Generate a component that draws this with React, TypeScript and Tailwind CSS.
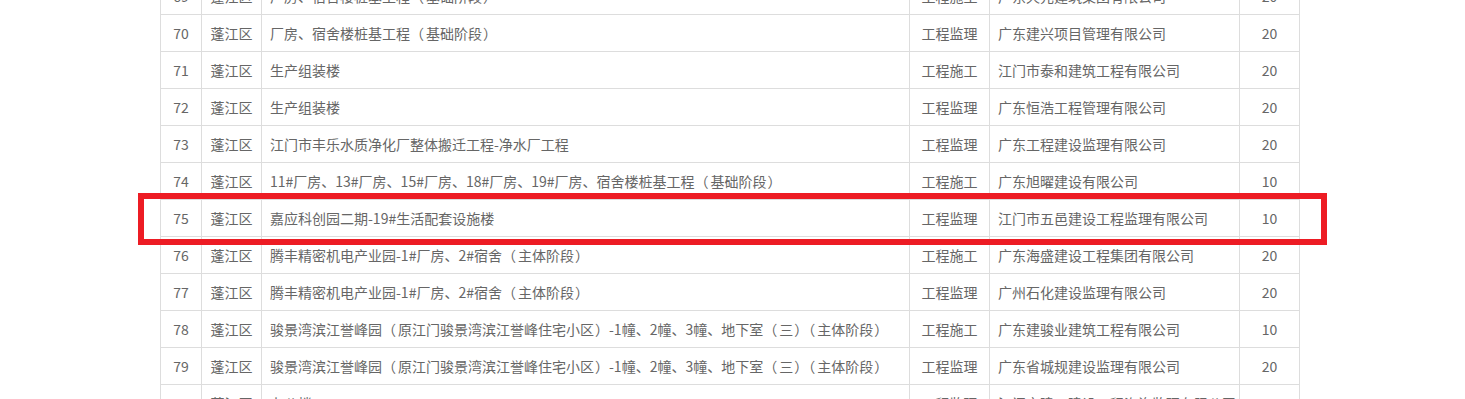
import React from 'react';

type Row = { no: number; area: string; name: string; kind: string; company: string; score: string };

const rows: Row[] = [
  { no: 69, area: '蓬江区', name: '厂房、宿舍楼桩基工程（基础阶段）', kind: '工程施工', company: '广东天元建筑集团有限公司', score: '20' },
  { no: 70, area: '蓬江区', name: '厂房、宿舍楼桩基工程（基础阶段）', kind: '工程监理', company: '广东建兴项目管理有限公司', score: '20' },
  { no: 71, area: '蓬江区', name: '生产组装楼', kind: '工程施工', company: '江门市泰和建筑工程有限公司', score: '20' },
  { no: 72, area: '蓬江区', name: '生产组装楼', kind: '工程监理', company: '广东恒浩工程管理有限公司', score: '20' },
  { no: 73, area: '蓬江区', name: '江门市丰乐水质净化厂整体搬迁工程-净水厂工程', kind: '工程监理', company: '广东工程建设监理有限公司', score: '20' },
  { no: 74, area: '蓬江区', name: '11#厂房、13#厂房、15#厂房、18#厂房、19#厂房、宿舍楼桩基工程（基础阶段）', kind: '工程施工', company: '广东旭曜建设有限公司', score: '10' },
  { no: 75, area: '蓬江区', name: '嘉应科创园二期-19#生活配套设施楼', kind: '工程监理', company: '江门市五邑建设工程监理有限公司', score: '10' },
  { no: 76, area: '蓬江区', name: '腾丰精密机电产业园-1#厂房、2#宿舍（主体阶段）', kind: '工程施工', company: '广东海盛建设工程集团有限公司', score: '20' },
  { no: 77, area: '蓬江区', name: '腾丰精密机电产业园-1#厂房、2#宿舍（主体阶段）', kind: '工程监理', company: '广州石化建设监理有限公司', score: '20' },
  { no: 78, area: '蓬江区', name: '骏景湾滨江誉峰园（原江门骏景湾滨江誉峰住宅小区）-1幢、2幢、3幢、地下室（三）（主体阶段）', kind: '工程施工', company: '广东建骏业建筑工程有限公司', score: '10' },
  { no: 79, area: '蓬江区', name: '骏景湾滨江誉峰园（原江门骏景湾滨江誉峰住宅小区）-1幢、2幢、3幢、地下室（三）（主体阶段）', kind: '工程监理', company: '广东省城规建设监理有限公司', score: '20' },
  { no: 80, area: '蓬江区', name: '办公楼', kind: '工程监理', company: '江门市建工建设工程咨询监理有限公司', score: '10' },
];

const cell = 'h-full flex items-center border-r border-[#dddddd] shrink-0';

// full-width parens sit centred in the original font, so pad the inner side a bit
function Name({ text }: { text: string }) {
  const parts = text.split(/([（）])/);
  return (
    <span>
      {parts.map((p, i) =>
        p === '（' ? (
          <span key={i} className="mr-[2px]">{p}</span>
        ) : p === '）' ? (
          <span key={i} className="ml-[1px]">{p}</span>
        ) : (
          <React.Fragment key={i}>{p}</React.Fragment>
        )
      )}
    </span>
  );
}

export default function App() {
  return (
    <div
      className="w-[1465px] h-[399px] overflow-hidden bg-white text-[14px] text-[#666666]"
      style={{ fontFamily: '"Noto Sans CJK SC", "Noto Sans", sans-serif' }}
    >
      <div className="relative ml-[160px] mt-[-22px] w-[1140px] border-l border-[#dddddd]">
        {rows.map((r) => (
          <div key={r.no} className="flex h-[37px] border-b border-[#dddddd]">
            <div className={`${cell} w-[41px] justify-center`}>{r.no}</div>
            <div className={`${cell} w-[60px] justify-center`}>{r.area}</div>
            <div className={`${cell} w-[648px] pl-[8px] whitespace-nowrap`}>
              <Name text={r.name} />
            </div>
            <div className={`${cell} w-[80px] justify-center`}>{r.kind}</div>
            <div className={`${cell} w-[250px] pl-[8px] whitespace-nowrap`}>{r.company}</div>
            <div className={`${cell} w-[60px] justify-center`}>{r.score}</div>
          </div>
        ))}
        <div className="absolute left-[-23px] top-[215px] w-[1189px] h-[52px] border-[6px] border-[#ed1c24]" />
      </div>
    </div>
  );
}
